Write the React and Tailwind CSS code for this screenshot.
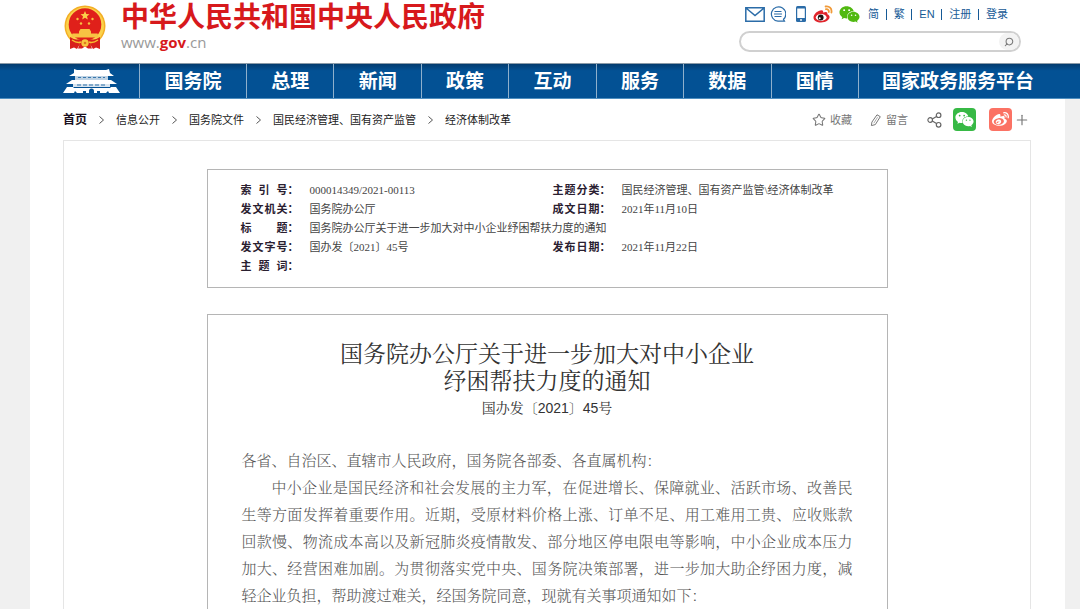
import React, { useState } from "react";
import { Star, Plus, Search } from "lucide-react";
import { FaWeixin, FaWeibo } from "react-icons/fa";

const navItems = ["国务院", "总理", "新闻", "政策", "互动", "服务", "数据", "国情", "国家政务服务平台"];

const crumbs = ["首页", "信息公开", "国务院文件", "国民经济管理、国有资产监管", "经济体制改革"];

const langLinks = ["简", "繁", "EN", "注册", "登录"];

const metaRows = [
  [["索引号", "000014349/2021-00113"], ["主题分类", "国民经济管理、国有资产监管\\经济体制改革"]],
  [["发文机关", "国务院办公厅"], ["成文日期", "2021年11月10日"]],
  [["标题", "国务院办公厅关于进一步加大对中小企业纾困帮扶力度的通知"]],
  [["发文字号", "国办发〔2021〕45号"], ["发布日期", "2021年11月22日"]],
  [["主题词", ""]],
];

function Emblem() {
  return (
    <svg viewBox="0 0 42 45" className="h-[45px] w-[42px]" aria-hidden="true">
      <circle cx="21" cy="21" r="20.5" fill="#f3ae25" />
      <circle cx="21" cy="21" r="19" fill="#fbd24b" />
      <circle cx="21" cy="19.500" r="16.300" fill="#e0201a" />
      <path d="M21 6l1.300 3 3.200.2-2.500 2.100.8 3.200-2.800-1.700-2.800 1.700.8-3.200-2.500-2.100 3.200-.2z" fill="#fbd04a" />
      <g fill="#f7c443">
        <circle cx="13.500" cy="14" r="1.200" />
        <circle cx="17" cy="18.500" r="1.200" />
        <circle cx="25" cy="18.500" r="1.200" />
        <circle cx="28.500" cy="14" r="1.200" />
        <path d="M16.500 24h9l1.500 2.500v2h6.500l1.500 4H7l1.500-4H15v-2z" />
      </g>
      <path d="M6 32q4 3 9 3l1 4-3 5-3-1.500L6 44z" fill="#d8201c" />
      <path d="M36 32q-4 3-9 3l-1 4 3 5 3-1.500 4 1.500z" fill="#d8201c" />
      <path d="M13 34.500h16l-3 4 2 5h-4l-3-2-3 2h-4l2-5z" fill="#d8201c" />
      <path d="M8 35q5 3.500 9 2M34 35q-5 3.500-9 2" fill="none" stroke="#f7c02f" strokeWidth="1.500" />
      <circle cx="21" cy="38" r="3.700" fill="#f8c83f" />
      <circle cx="21" cy="38" r="1.300" fill="#e07a1e" />
    </svg>
  );
}

function GateIcon() {
  return (
    <svg viewBox="0 0 57 26" className="h-[26px] w-[57px]" aria-hidden="true">
      <g fill="#fff">
        <path d="M11 1l3 1h29l3-1 1 4 4 3H6l5-3z" />
        <path d="M12 8h33v4H12z" opacity=".75" />
        <path d="M9 12h39l6 4H3z" />
        <path d="M10 16h37v3H10z" opacity=".85" />
        <path d="M4 19h6l1 1h36l1-1h5l4 6H46l-1-2-2 2h-6v-2h-3v2h-3v-2a2.500 2.500 0 0 0-5 0v2h-3v-2h-3v2h-6l-2-2-1 2H0z" />
      </g>
      <path d="M15 9.500h27" stroke="#3a78ac" strokeDasharray="3 2" />
      <path d="M14 17h29" stroke="#2d6fa6" strokeDasharray="4 2" />
    </svg>
  );
}

function WeiboColor() {
  return (
    <svg viewBox="0 0 20 18" className="h-[18px] w-5" aria-hidden="true">
      <path d="M8.500 5.200C5 5.200.5 9 .5 12.400.5 15.600 4 17.400 8 17.400c5 0 8.600-2.800 8.600-5.400 0-1.600-1.300-2.500-2.300-2.800.6-1.700-.3-3.200-4.300-1.700.5-1.400-.1-2.300-1.500-2.300z" fill="#e0242b" />
      <ellipse cx="8.200" cy="12.400" rx="5.400" ry="3.500" fill="#fff" />
      <circle cx="7.700" cy="12.500" r="2.900" fill="#1c1414" />
      <circle cx="6.700" cy="13.200" r="1" fill="#fff" />
      <path d="M12.600 1.500c3.500-.8 6.600 2 5.800 6M13 4.200c1.700-.4 3.200 1 2.800 2.800" fill="none" stroke="#f19a38" strokeWidth="1.800" strokeLinecap="round" />
    </svg>
  );
}

function PhoneIcon() {
  return (
    <svg viewBox="0 0 10 16" className="h-4 w-[10px]" aria-hidden="true">
      <rect width="10" height="16" rx="1.500" fill="#2b6ca8" />
      <path d="M1.200 2.500h7.600v9.500H1.200z" fill="#fff" />
      <circle cx="5" cy="14" r=".9" fill="#fff" />
    </svg>
  );
}

function PencilIcon() {
  return (
    <svg viewBox="0 0 11 12" className="h-3 w-[11px]" fill="none" stroke="currentColor" strokeLinejoin="round" aria-hidden="true">
      <path d="M7 .8l3.300 1.900-5 7.900-3.900 1 .5-3.500z" />
      <path d="M7.600 3.200L3.800 9.200" strokeWidth=".6" />
    </svg>
  );
}

function ShareIcon() {
  return (
    <svg viewBox="0 0 15 16" className="h-4 w-[15px]" fill="none" stroke="#666" strokeWidth="1.200" aria-hidden="true">
      <circle cx="3.200" cy="8" r="2.300" />
      <circle cx="11.600" cy="3.200" r="2.300" />
      <circle cx="11.600" cy="12.800" r="2.300" />
      <path d="M5.300 7l4.200-2.500M5.300 9l4.200 2.500" />
    </svg>
  );
}

function Header() {
  const [keyword, setKeyword] = useState("");

  return (
    <header className="flex h-[63px] shrink-0 justify-between pl-16 pr-[59px]">
      <div className="flex gap-[15px] pt-[5px]">
        <Emblem />
        <div>
          <h1 className="-mt-[3px] text-[28px] leading-8 font-bold text-[#d7191c]">中华人民共和国中央人民政府</h1>
          <p className="font-['Open_Sans','Liberation_Sans',sans-serif] text-[15px] leading-4 text-[#999]">
            www.<b className="text-[#d7191c]">gov</b>.cn
          </p>
        </div>
      </div>

      <div className="w-[282px] pt-1">
        <div className="flex h-5 items-center pl-[6px] pr-[13px]">
          <a href="#mail" aria-label="邮箱" className="mr-[5px]">
            <svg viewBox="0 0 20 15" className="h-[15px] w-5" fill="none" stroke="#2b6ca8" strokeWidth="1.500">
              <path d="M.8.8h18.400v13.400H.8zM1 1l9 7.500L19 1" />
            </svg>
          </a>
          <a href="#message" aria-label="留言" className="mr-[10px]">
            <svg viewBox="0 0 16 16" className="size-4" fill="none" stroke="#2b6ca8" strokeWidth="1.200">
              <path d="M13.500 13.300A7.200 7.200 0 1 0 8 15.200h6.500zM4.500 5.500h7M4 8h8M4.500 10.500h7" />
            </svg>
          </a>
          <a href="#mobile" aria-label="手机版" className="mr-[7px]"><PhoneIcon /></a>
          <a href="#weibo" aria-label="微博" className="mr-[6px]"><WeiboColor /></a>
          <a href="#wechat" aria-label="微信" className="mr-2"><FaWeixin className="size-[21px] text-[#51b911]" /></a>
          <div className="flex flex-1 items-center justify-between text-[11px] leading-4 whitespace-nowrap text-[#165a96]">
            {langLinks.map((item, index) => (
              <React.Fragment key={item}>
                {index > 0 && <span className="h-[11px] w-px bg-[#165a96]" />}
                <a href="#lang">{item}</a>
              </React.Fragment>
            ))}
          </div>
        </div>
        <form className="mt-[7px] flex h-[21px] items-center rounded-full border-2 border-[#d0d0d0] bg-white" onSubmit={(e) => e.preventDefault()}>
          <input
            type="text"
            aria-label="搜索"
            value={keyword}
            onChange={(e) => setKeyword(e.target.value)}
            className="h-4 min-w-0 flex-1 bg-transparent px-3 text-xs outline-none"
          />
          <button type="submit" aria-label="搜索" className="flex h-[17px] w-5 items-center justify-center rounded-full bg-[#f3f3f3]">
            <Search className="size-[10px] -scale-x-100 text-[#777]" strokeWidth={2.5} />
          </button>
        </form>
      </div>
    </header>
  );
}

function Navbar() {
  return (
    <nav className="h-9 shrink-0 border-t border-b border-t-[#8a9aa8] border-b-[#4f8fc0] bg-[#035194] bg-linear-to-b from-[#033c6f] to-[#035194] to-20% pl-[63px] pr-[46px]">
      <div className="grid h-full grid-cols-[76px_107px_repeat(7,minmax(0,1fr))_176px]">
        <a href="#home" aria-label="首页" className="flex items-center"><GateIcon /></a>
        {navItems.map((item) => (
          <a
            key={item}
            href="#nav"
            className="flex items-center justify-center border-l border-[#8fb0cc] pt-[2px] text-[19px] leading-6 font-bold whitespace-nowrap text-white last:justify-end"
          >
            {item}
          </a>
        ))}
      </div>
    </nav>
  );
}

function Toolbar() {
  return (
    <div className="flex items-center pr-px text-[11px] leading-4 text-[#777]">
      <button type="button" className="mr-[18px] flex items-center gap-1"><Star className="size-[14px]" strokeWidth={1.75} />收藏</button>
      <button type="button" className="mr-[19px] flex items-center gap-[5px]"><PencilIcon />留言</button>
      <button type="button" aria-label="分享" className="mr-[11px]"><ShareIcon /></button>
      <button type="button" aria-label="微信" className="mr-[13px] flex size-[23px] items-center justify-center rounded-sm bg-[#37b945]">
        <FaWeixin className="size-[19px] text-white" />
      </button>
      <button type="button" aria-label="微博" className="mr-[2px] flex size-[23px] items-center justify-center rounded-sm bg-[#fb7264]">
        <FaWeibo className="size-[17px] text-white" />
      </button>
      <button type="button" aria-label="更多"><Plus className="size-4" strokeWidth={1.75} /></button>
    </div>
  );
}

function Breadcrumb() {
  return (
    <div className="flex h-[41px] shrink-0 items-center justify-between">
      <ol className="flex items-center text-[11px] leading-4 whitespace-nowrap text-[#222]">
        {crumbs.map((item, index) => (
          <li key={item} className="flex items-center">
            {index > 0 && (
              <svg viewBox="0 0 5 8" className="mx-3 h-2 w-[5px]" fill="none" stroke="#555">
                <path d="M.5.5L4.500 4 .5 7.500" />
              </svg>
            )}
            <a href="#crumb" className={index === 0 ? "text-[12px] font-bold text-[#1a1020]" : ""}>{item}</a>
          </li>
        ))}
      </ol>
      <Toolbar />
    </div>
  );
}

function MetaTable() {
  return (
    <div className="mx-auto max-w-[681px] border border-[#b5b5b5] px-[33px] pt-[11px] pb-[11px]">
      <table className="w-full table-fixed text-left text-[11px] leading-[19px] whitespace-nowrap">
        <colgroup>
          <col className="w-[69px]" />
          <col className="w-[243px]" />
          <col className="w-[69px]" />
          <col />
        </colgroup>
        <tbody>
          {metaRows.map((row) => (
            <tr key={row[0][0]} className="h-[19px]">
              {row.map(([label, value]) => (
                <React.Fragment key={label}>
                  <th scope="row" className="p-0 font-bold text-[#2a2030]">
                    <span className="inline-block w-[47px] align-top [text-align-last:justify]">{label}</span>：
                  </th>
                  <td
                    colSpan={row.length === 1 ? 3 : 1}
                    className="p-0 font-['Liberation_Serif','Noto_Sans_CJK_SC',serif] text-[#444]"
                  >
                    {value}
                  </td>
                </React.Fragment>
              ))}
            </tr>
          ))}
        </tbody>
      </table>
    </div>
  );
}

function Notice() {
  return (
    <article className="mx-auto mt-[26px] w-full max-w-[681px] flex-1 border border-b-0 border-[#b5b5b5] px-[34px] pt-[26px] font-['Liberation_Serif','Noto_Serif_CJK_SC','Noto_Sans_CJK_SC',serif]">
      <h2 className="text-center text-[23px] leading-[27px] font-normal text-[#333]">
        国务院办公厅关于进一步加大对中小企业<br />纾困帮扶力度的通知
      </h2>
      <p className="text-center font-['Liberation_Sans','Noto_Serif_CJK_SC','Noto_Sans_CJK_SC',sans-serif] text-[14px] leading-[27px] text-[#333]">
        国办发〔2021〕45号
      </p>
      <div className="mt-[26px] text-justify text-[15px] leading-[27px] font-light text-[#555]">
        <p>各省、自治区、直辖市人民政府，国务院各部委、各直属机构：</p>
        <p className="indent-[2em]">
          中小企业是国民经济和社会发展的主力军，在促进增长、保障就业、活跃市场、改善民生等方面发挥着重要作用。近期，受原材料价格上涨、订单不足、用工难用工贵、应收账款回款慢、物流成本高以及新冠肺炎疫情散发、部分地区停电限电等影响，中小企业成本压力加大、经营困难加剧。为贯彻落实党中央、国务院决策部署，进一步加大助企纾困力度，减轻企业负担，帮助渡过难关，经国务院同意，现就有关事项通知如下：
        </p>
      </div>
    </article>
  );
}

export default function App() {
  return (
    <div lang="zh-CN" className="flex h-screen flex-col overflow-hidden bg-white font-['Liberation_Sans','Noto_Sans_CJK_SC',sans-serif]">
      <Header />
      <Navbar />
      <div className="flex min-h-0 flex-1 bg-[#f0f0f0] pr-[15px] pl-[30px]">
        <main className="flex flex-1 flex-col bg-white pr-[34px] pl-[33px]">
          <Breadcrumb />
          <div className="flex flex-1 flex-col border border-b-0 border-[#e5e5e5] pt-7">
            <div><MetaTable /></div>
            <Notice />
          </div>
        </main>
      </div>
    </div>
  );
}
